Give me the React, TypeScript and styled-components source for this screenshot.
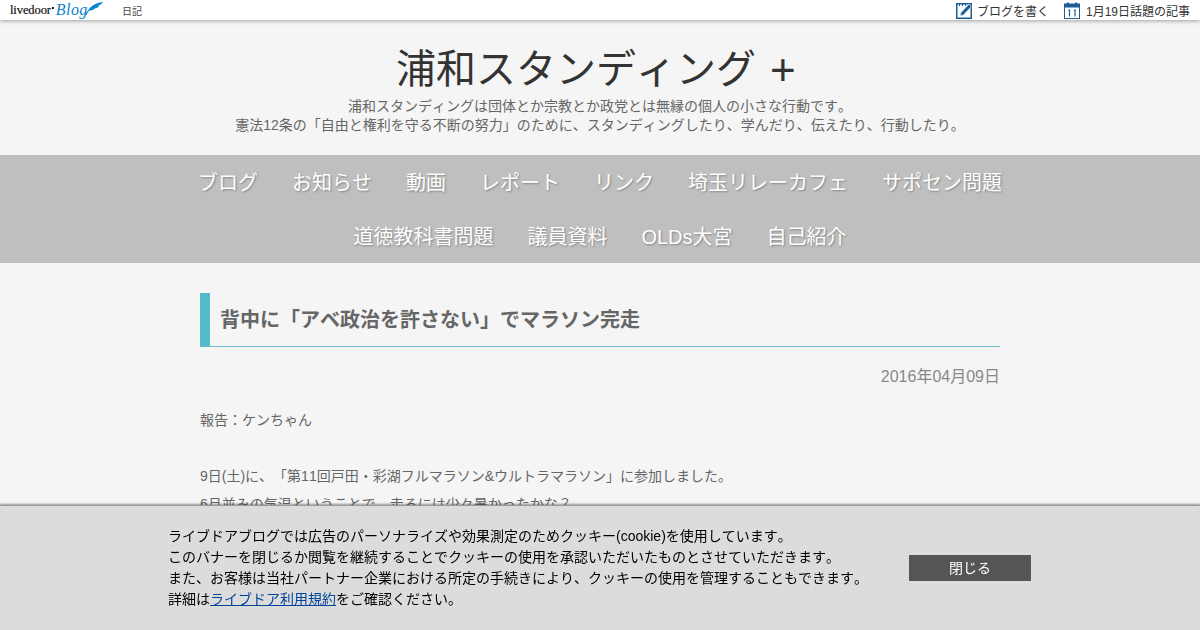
import React from 'react'
import styled, { createGlobalStyle } from 'styled-components'

const FONT = `"Liberation Sans", Arial, "Noto Sans CJK JP", sans-serif`

const GlobalStyle = createGlobalStyle`
  html, body {
    margin: 0;
    padding: 0;
    height: 100%;
    overflow: hidden;
    background: #f5f5f5;
    font-family: ${FONT};
    text-spacing-trim: space-all;
    font-kerning: none;
  }
`

/* Top bar */
const TopBar = styled.div`
  height: 20px;
  background: #fff;
  box-shadow: 0 1px 4px rgba(0, 0, 0, 0.35);
  display: flex;
  align-items: center;
  padding: 0 10px;
  position: relative;
`
const Logo = styled.div`
  display: flex;
  align-items: center;
  width: 112px;
`
const LogoWord = styled.span`
  font-family: "Liberation Serif", serif;
  font-size: 12.5px;
  color: #111;
  letter-spacing: -0.1px;
  -webkit-text-stroke: 0.2px #111;
`
const LogoDot = styled.i`
  width: 2px;
  height: 2px;
  margin: -5px 0 0 1px;
  background: #222;
`
const LogoBlog = styled.span`
  font-family: "Liberation Serif", serif;
  font-style: italic;
  font-size: 16px;
  color: #0a84d0;
  margin-left: 2px;
  letter-spacing: 0.4px;
`
const LogoQuill = styled.svg`
  margin-left: -3px;
  margin-top: -3px;
`
const BarCategory = styled.a`
  font-size: 10px;
  color: #444;
`
const BarRight = styled.div`
  margin-left: auto;
  display: flex;
  align-items: center;
  gap: 15px;
`
const BarLink = styled.a`
  display: flex;
  align-items: center;
  gap: 5px;
  font-size: 12px;
  color: #333;
`

/* Header */
const Header = styled.header`
  text-align: center;
  height: 135px;
  padding-top: 24px;
  box-sizing: border-box;
`
const BlogTitle = styled.h1`
  margin: 0;
  font-weight: normal;
  font-size: 40px;
  line-height: 50px;
  color: #333;
`
const TitlePlus = styled.span`
  display: inline-block;
  width: 48px;
  padding-left: 14px;
  box-sizing: border-box;
  text-align: left;
  font-size: 44px;
  line-height: 1;
  vertical-align: -2px;
`
const BlogDescription = styled.p`
  margin: 3px 0 0;
  font-size: 14px;
  line-height: 19px;
  color: #666;
`

/* Navigation */
const Nav = styled.nav`
  background: #bfbfbf;
  height: 108px;
  display: flex;
  flex-wrap: wrap;
  justify-content: center;
  align-content: flex-start;
  padding: 1px 180px 0;
  box-sizing: border-box;
`
const NavItem = styled.a`
  font-size: 20px;
  line-height: 54px;
  color: #fff;
  padding: 0 17px;
  text-shadow: 1px 1px 2px rgba(0, 0, 0, 0.3);
`

/* Article */
const Article = styled.article`
  width: 800px;
  margin: 30px auto 0;
`
const ArticleTitle = styled.h2`
  margin: 0;
  height: 54px;
  box-sizing: border-box;
  border-left: 10px solid #55bac8;
  border-bottom: 1px solid #6fbccb;
  padding-left: 10px;
  font-size: 20px;
  line-height: 55px;
  color: #666;
`
const ArticleDate = styled.div`
  margin-top: 20px;
  text-align: right;
  font-size: 16px;
  line-height: 20px;
  color: #888;
`
const ArticleBody = styled.div`
  margin-top: 19px;
  font-size: 14px;
  line-height: 28px;
  color: #666;
`

/* Cookie banner */
const CookieBanner = styled.div`
  position: fixed;
  left: 0;
  right: 0;
  bottom: 0;
  height: 125px;
  box-sizing: border-box;
  background: #dcdcdc;
  border-top: 1px solid #999;
  box-shadow: 0 -1px 2px rgba(0, 0, 0, 0.4);
  display: flex;
  align-items: center;
  padding-left: 168px;
`
const CookieText = styled.div`
  width: 741px;
  font-size: 14px;
  line-height: 21px;
  color: #000;
`
const CookieLink = styled.a`
  color: #004499;
  text-decoration: underline;
`
const CloseButton = styled.button`
  width: 122px;
  height: 26px;
  border: 0;
  padding: 0 0 2px;
  background: #555;
  color: #fff;
  font-family: ${FONT};
  font-size: 14px;
`

const PenIcon = () => (
  <svg width="16" height="17" viewBox="0 0 16 17">
    <rect x="0.75" y="1.75" width="14.5" height="14.5" fill="#fff" stroke="#1d5f94" strokeWidth="1.5" />
    <path d="M3 1.5 H4 V4 H3 Z M6 1.5 H7 V4 H6 Z M9 1.5 H10 V4 H9 Z" fill="#1d5f94" />
    <path d="M4 14 L5 10.5 L13 2 L15.5 4.5 L7.5 13 Z" fill="#1d5f94" stroke="#fff" strokeWidth="0.6" />
  </svg>
)

const CalendarIcon = () => (
  <svg width="17" height="17" viewBox="0 0 17 17">
    <rect x="0.5" y="2" width="15" height="14.5" fill="#fff" stroke="#1d5f94" />
    <rect x="0.5" y="2" width="15" height="3.5" fill="#1d5f94" />
    <rect x="3" y="0.5" width="2" height="3" fill="#1d5f94" />
    <rect x="11" y="0.5" width="2" height="3" fill="#1d5f94" />
    <path d="M4.5 8.5 L5.5 8 V14.5 M10 8.5 L11 8 V14.5" stroke="#1d5f94" strokeWidth="1.2" fill="none" />
  </svg>
)

const QuillIcon = () => (
  <LogoQuill width="18" height="13" viewBox="0 0 24 15" preserveAspectRatio="none">
    <path d="M0 15 C5 7 11 1 24 0 C22 3 20 3 18 4 C19 5 17 7 14 7 C12 9 8 10 5 10 L2 15 Z" fill="#0a84d0" />
  </LogoQuill>
)

const navItems = ['ブログ', 'お知らせ', '動画', 'レポート', 'リンク', '埼玉リレーカフェ', 'サポセン問題', '道徳教科書問題', '議員資料', 'OLDs大宮', '自己紹介']

const App = () => {
  return (
    <>
      <GlobalStyle />
      <TopBar>
        <Logo>
          <LogoWord>livedoor</LogoWord>
          <LogoDot />
          <LogoBlog>Blog</LogoBlog>
          <QuillIcon />
        </Logo>
        <BarCategory>日記</BarCategory>
        <BarRight>
          <BarLink><PenIcon />ブログを書く</BarLink>
          <BarLink><CalendarIcon />1月19日話題の記事</BarLink>
        </BarRight>
      </TopBar>
      <Header>
        <BlogTitle>浦和スタンディング<TitlePlus>+</TitlePlus></BlogTitle>
        <BlogDescription>
          浦和スタンディングは団体とか宗教とか政党とは無縁の個人の小さな行動です。
          <br />
          憲法12条の「自由と権利を守る不断の努力」のために、スタンディングしたり、学んだり、伝えたり、行動したり。
        </BlogDescription>
      </Header>
      <Nav>
        {navItems.map((item) => (
          <NavItem key={item}>{item}</NavItem>
        ))}
      </Nav>
      <Article>
        <ArticleTitle>背中に「アベ政治を許さない」でマラソン完走</ArticleTitle>
        <ArticleDate>2016年04月09日</ArticleDate>
        <ArticleBody>
          報告：ケンちゃん
          <br />
          <br />
          9日(土)に、「第11回戸田・彩湖フルマラソン&amp;ウルトラマラソン」に参加しました。
          <br />
          6月並みの気温ということで、走るには少々暑かったかな？
        </ArticleBody>
      </Article>
      <CookieBanner>
        <CookieText>
          ライブドアブログでは広告のパーソナライズや効果測定のためクッキー(cookie)を使用しています。
          <br />
          このバナーを閉じるか閲覧を継続することでクッキーの使用を承認いただいたものとさせていただきます。
          <br />
          また、お客様は当社パートナー企業における所定の手続きにより、クッキーの使用を管理することもできます。
          <br />
          詳細は<CookieLink>ライブドア利用規約</CookieLink>をご確認ください。
        </CookieText>
        <CloseButton>閉じる</CloseButton>
      </CookieBanner>
    </>
  )
}

export default App
